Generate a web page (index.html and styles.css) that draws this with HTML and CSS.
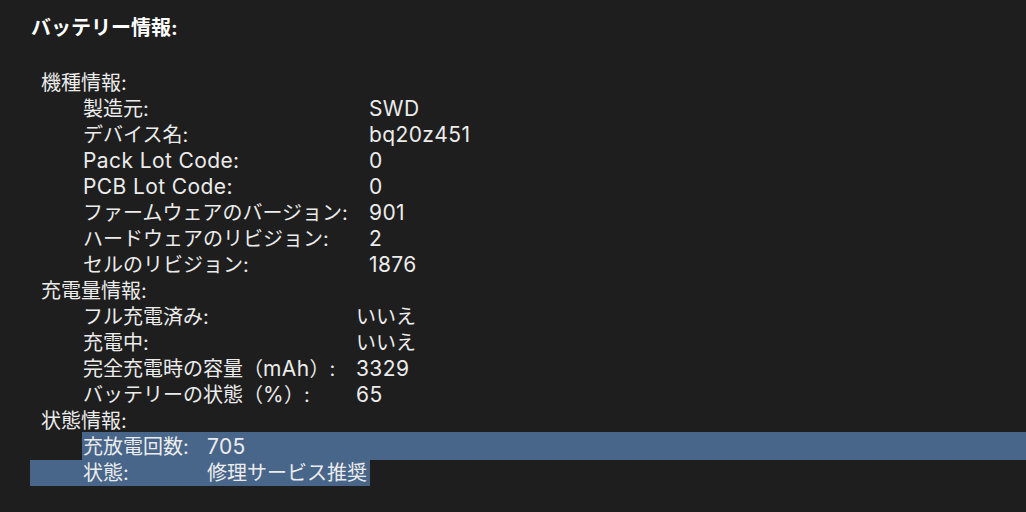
FILE: index.html
```html
<!DOCTYPE html>
<html lang="ja">
<head>
<meta charset="utf-8">
<link rel="stylesheet" href="styles.css">
</head>
<body>
<div class="page">
  <h1 class="title">バッテリー情報:</h1>

  <div class="section">
    <div class="section-title">機種情報:</div>
    <div class="rows rows-model">
      <div class="row"><span class="label">製造元:</span><span class="value en">SWD</span></div>
      <div class="row"><span class="label">デバイス名:</span><span class="value en">bq20z451</span></div>
      <div class="row"><span class="label en">Pack Lot Code:</span><span class="value en">0</span></div>
      <div class="row"><span class="label en">PCB Lot Code:</span><span class="value en">0</span></div>
      <div class="row"><span class="label">ファームウェアのバージョン:</span><span class="value en">901</span></div>
      <div class="row"><span class="label">ハードウェアのリビジョン:</span><span class="value en">2</span></div>
      <div class="row"><span class="label">セルのリビジョン:</span><span class="value en">1876</span></div>
    </div>
  </div>

  <div class="section">
    <div class="section-title">充電量情報:</div>
    <div class="rows rows-charge">
      <div class="row"><span class="label">フル充電済み:</span><span class="value">いいえ</span></div>
      <div class="row"><span class="label">充電中:</span><span class="value">いいえ</span></div>
      <div class="row"><span class="label">完全充電時の容量（<span class="en">mAh</span>）:</span><span class="value en">3329</span></div>
      <div class="row"><span class="label">バッテリーの状態（<span class="en">%</span>）:</span><span class="value en">65</span></div>
    </div>
  </div>

  <div class="section">
    <div class="section-title">状態情報:</div>
    <div class="rows rows-health">
      <div class="row sel-first"><span class="label">充放電回数:</span><span class="value en">705</span></div>
      <div class="row sel-last"><span class="label">状態:</span><span class="value">修理サービス推奨</span></div>
    </div>
  </div>
</div>
</body>
</html>
```

FILE: styles.css
```css
html, body {
  margin: 0;
  padding: 0;
  background: #1e1e1e;
}

body {
  width: 1026px;
  height: 512px;
  overflow: hidden;
  color: #ececec;
  font-family: "Inter", "Noto Sans CJK JP", sans-serif;
  font-size: 20px;
}

.page {
  padding: 15px 0 0 30px;
}

.title {
  margin: 0 0 29px 1px;
  font-size: 20px;
  font-weight: 700;
  line-height: 26px;
  color: #ffffff;
}

.section-title {
  padding-left: 11px;
  line-height: 26px;
}

.rows {
  display: flex;
  flex-direction: column;
}

.row {
  display: flex;
  height: 26px;
  line-height: 26px;
  padding-left: 53px;
  white-space: nowrap;
}

.en {
  font-size: 21px;
  letter-spacing: 0.4px;
}

.rows-model .label { width: 286px; }
.rows-charge .label { width: 273px; }
.rows-health .label { width: 124px; }

.sel-first {
  margin-top: -2px;
  padding-top: 2px;
  margin-left: 52px;
  padding-left: 1px;
  background: #48658a;
}

.sel-last {
  width: 287px;
  background: #48658a;
}
```
